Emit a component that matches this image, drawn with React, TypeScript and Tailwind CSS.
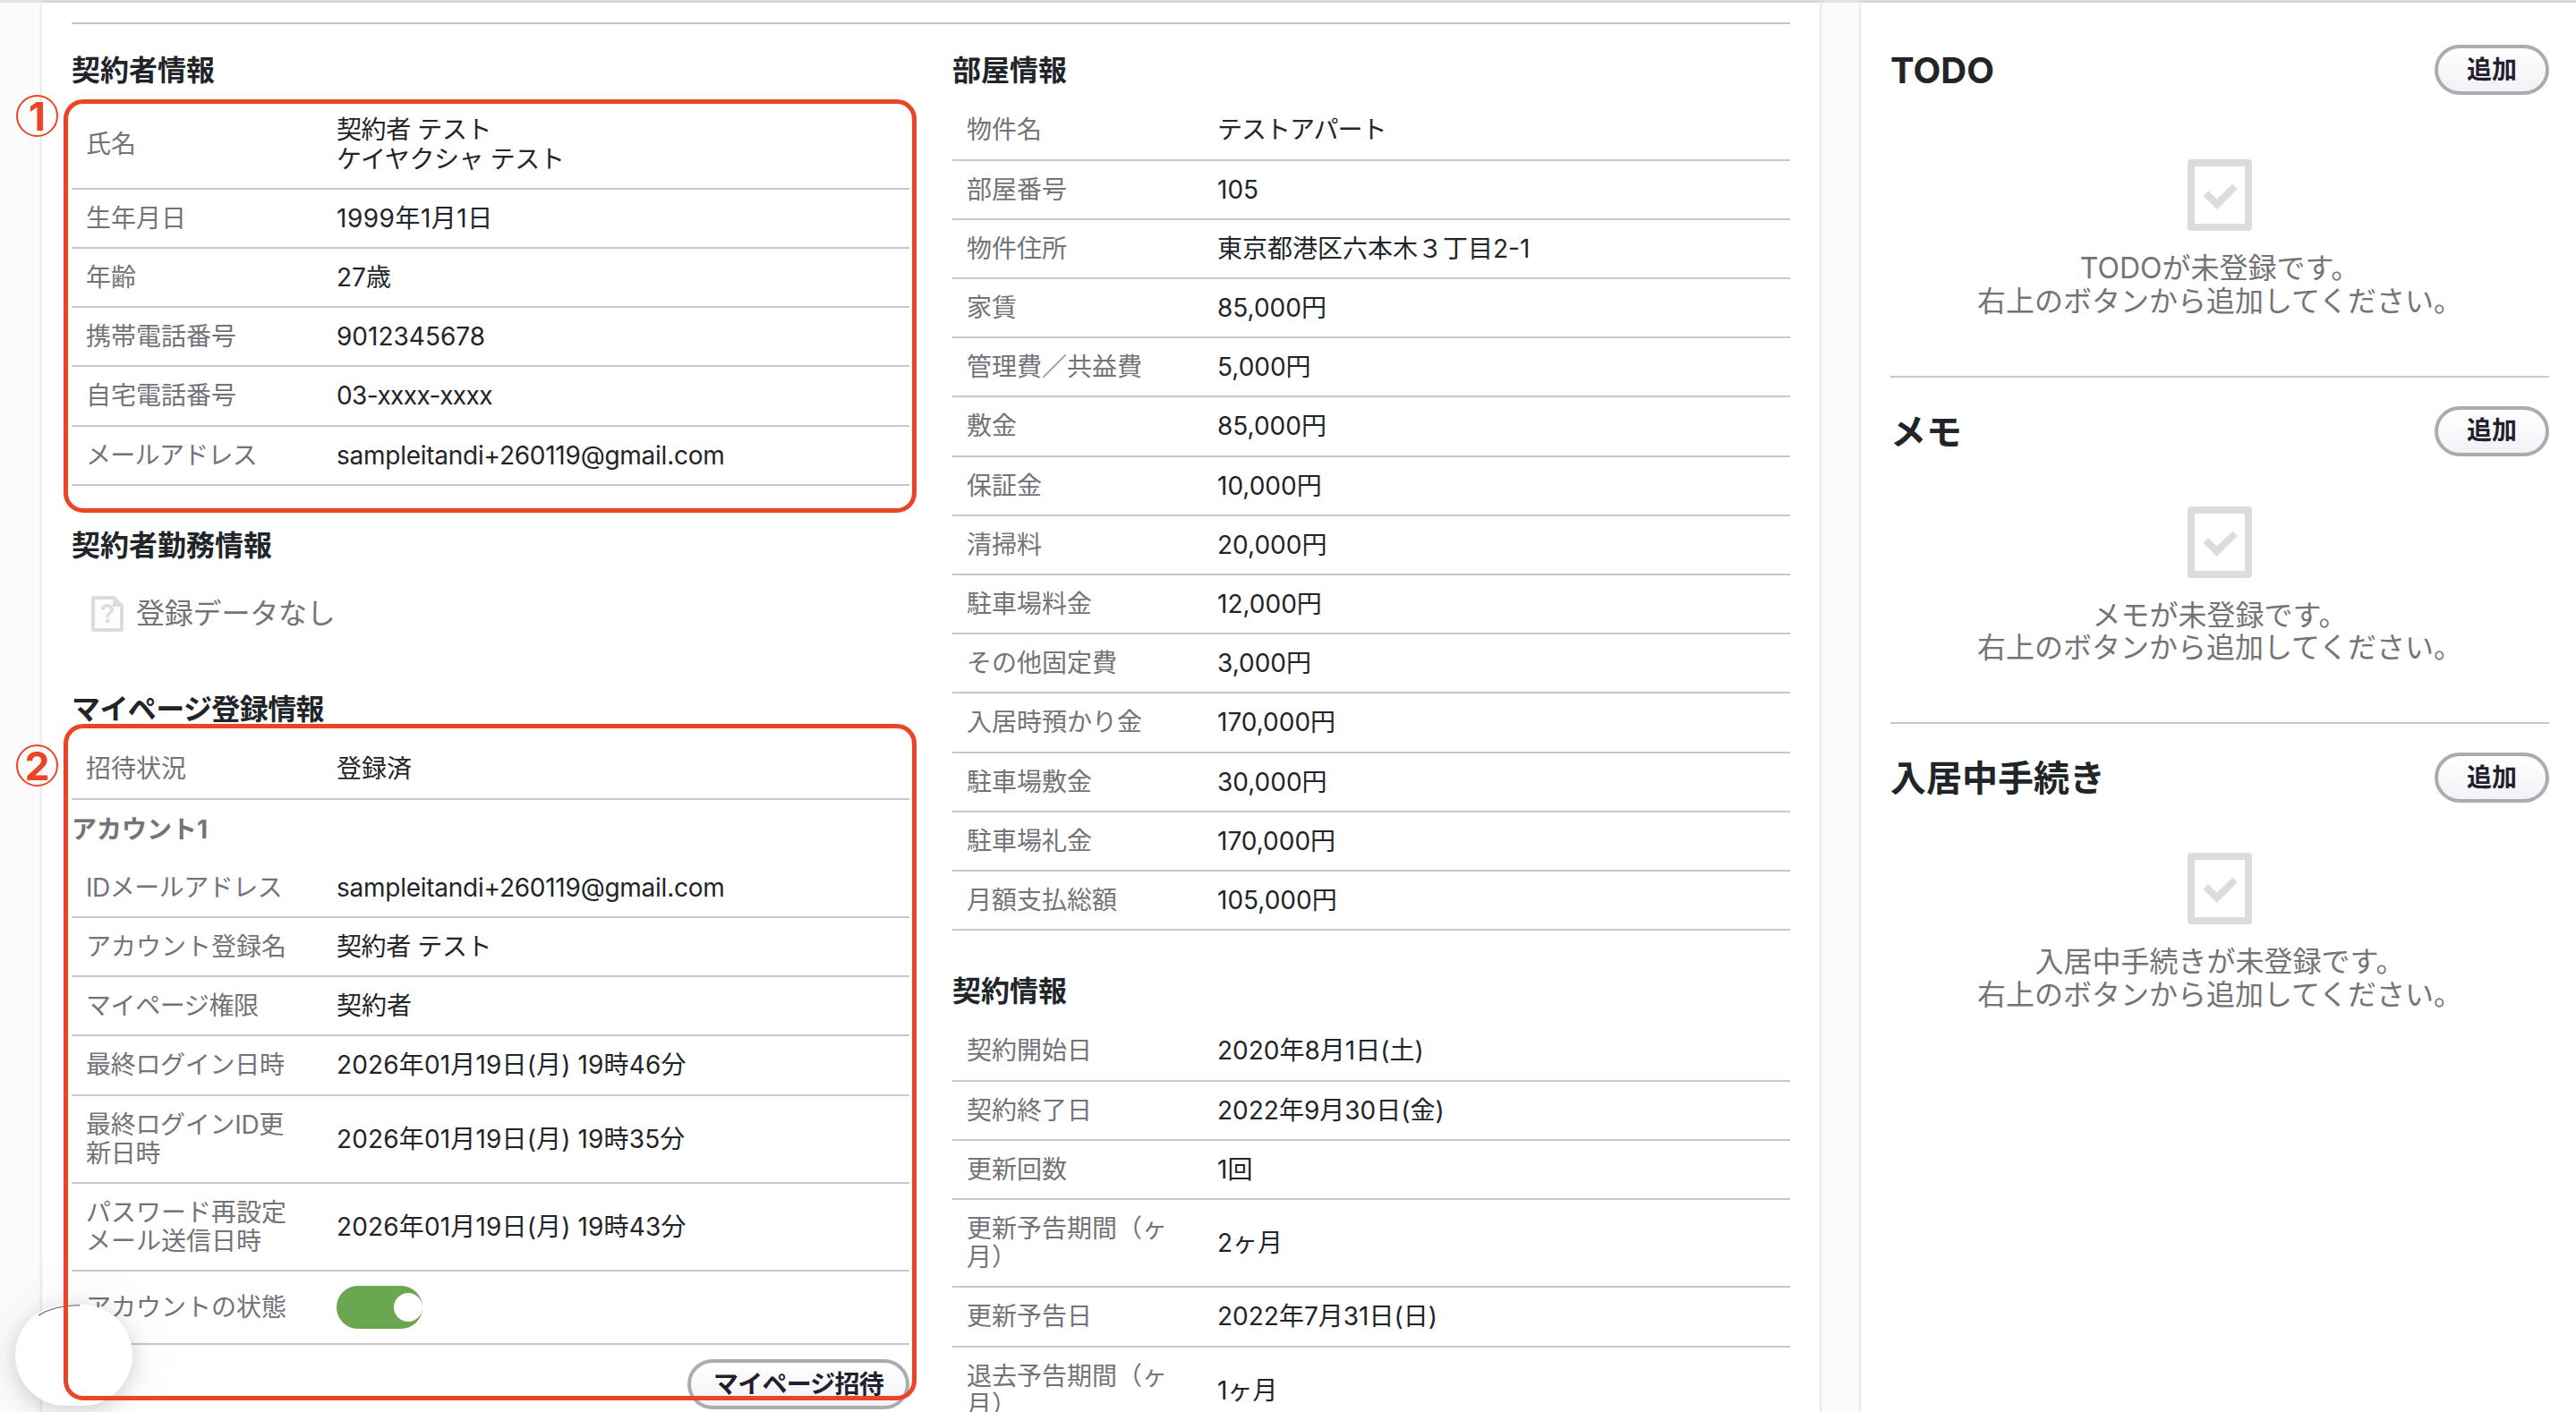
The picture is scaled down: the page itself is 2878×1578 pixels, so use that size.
import { ReactNode } from "react";

type Row = { label: string; value: ReactNode; labelClass?: string; valueClass?: string };

const contractor: Row[] = [
  {
    label: "氏名",
    value: (
      <>
        契約者 テスト
        <br />
        ケイヤクシャ テスト
      </>
    ),
    valueClass: "tracking-[-0.4px]",
  },
  { label: "生年月日", value: "1999年1月1日", valueClass: "tracking-[0.5px]" },
  { label: "年齢", value: "27歳" },
  { label: "携帯電話番号", value: "9012345678" },
  { label: "自宅電話番号", value: "03-xxxx-xxxx", valueClass: "tracking-[-0.6px]" },
  {
    label: "メールアドレス",
    value: "sampleitandi+260119@gmail.com",
    labelClass: "tracking-[-0.7px]",
    valueClass: "tracking-[-0.25px]",
  },
];

const account: Row[] = [
  {
    label: "IDメールアドレス",
    value: "sampleitandi+260119@gmail.com",
    labelClass: "tracking-[-0.5px]",
    valueClass: "tracking-[-0.25px]",
  },
  { label: "アカウント登録名", value: "契約者 テスト", valueClass: "tracking-[-0.4px]" },
  { label: "マイページ権限", value: "契約者", labelClass: "tracking-[-0.4px]" },
  {
    label: "最終ログイン日時",
    value: "2026年01月19日(月) 19時46分",
    labelClass: "tracking-[-0.3px]",
    valueClass: "tracking-[0.15px]",
  },
  {
    label: "最終ログインID更新日時",
    value: "2026年01月19日(月) 19時35分",
    labelClass: "tracking-[-0.3px]",
    valueClass: "tracking-[0.15px]",
  },
  {
    label: "パスワード再設定メール送信日時",
    value: "2026年01月19日(月) 19時43分",
    valueClass: "tracking-[0.15px]",
  },
  { label: "アカウントの状態", value: <Toggle /> },
];

const room: Row[] = [
  { label: "物件名", value: "テストアパート", valueClass: "tracking-[-1px]" },
  { label: "部屋番号", value: "105" },
  { label: "物件住所", value: "東京都港区六本木３丁目2-1" },
  { label: "家賃", value: "85,000円" },
  { label: "管理費／共益費", value: "5,000円" },
  { label: "敷金", value: "85,000円" },
  { label: "保証金", value: "10,000円" },
  { label: "清掃料", value: "20,000円" },
  { label: "駐車場料金", value: "12,000円" },
  { label: "その他固定費", value: "3,000円" },
  { label: "入居時預かり金", value: "170,000円" },
  { label: "駐車場敷金", value: "30,000円" },
  { label: "駐車場礼金", value: "170,000円" },
  { label: "月額支払総額", value: "105,000円" },
];

const contract: Row[] = [
  { label: "契約開始日", value: "2020年8月1日(土)" },
  { label: "契約終了日", value: "2022年9月30日(金)" },
  { label: "更新回数", value: "1回" },
  { label: "更新予告期間（ヶ月）", value: "2ヶ月" },
  { label: "更新予告日", value: "2022年7月31日(日)" },
  { label: "退去予告期間（ヶ月）", value: "1ヶ月" },
];

const sideSections = ["TODO", "メモ", "入居中手続き"];

function Toggle() {
  return (
    <div className="flex h-12 w-24 items-center justify-end rounded-full bg-[#6ba650]">
      <div className="size-8 rounded-full bg-white" />
    </div>
  );
}

const Heading = ({ children }: { children: ReactNode }) => (
  <h2 className="mb-4 text-[32px] leading-[36.8px] font-bold text-[#212529]">{children}</h2>
);

const InfoTable = ({ rows }: { rows: Row[] }) => (
  <dl>
    {rows.map((row) => (
      <div key={row.label} className="flex items-center border-b-2 border-[#c7c7cc] py-4">
        <dt className={`w-[296px] shrink-0 pr-8 pl-4 break-all text-[#737378] ${row.labelClass ?? ""}`}>
          {row.label}
        </dt>
        <dd className={`text-[#212529] ${row.valueClass ?? ""}`}>{row.value}</dd>
      </div>
    ))}
  </dl>
);

const PillButton = ({ children, className = "w-32" }: { children: ReactNode; className?: string }) => (
  <button
    className={`flex h-14 items-center justify-center rounded-full border-4 border-[#acacaf] bg-linear-to-b from-white to-[#f2f2f7] font-bold whitespace-nowrap text-[#231f2e] ${className}`}
  >
    {children}
  </button>
);

const CheckIcon = () => (
  <svg width="72" height="80" viewBox="0 0 72 80" fill="#dcdcde">
    <path
      fillRule="evenodd"
      d="M4 0h64a4 4 0 0 1 4 4v72a4 4 0 0 1-4 4H4a4 4 0 0 1-4-4V4a4 4 0 0 1 4-4zM8 8v64h56V8z"
    />
    <path d="M17.7 41l5.3-6 9.8 9.5 17.7-17 5.3 5.4L32.8 56z" />
  </svg>
);

const NoDataIcon = () => (
  <svg width="36" height="40" viewBox="0 0 36 40" fill="#dcdcde">
    <path
      fillRule="evenodd"
      d="M2 0h24l10 10v28a2 2 0 0 1-2 2H2a2 2 0 0 1-2-2V2a2 2 0 0 1 2-2zM4 4v32h28V12h-8V4z"
    />
    <path d="M11 15.500c0-4 3-6.500 7-6.500s7 2.300 7 6c0 4.400-5 4.800-5 9h-4c0-5.400 5-6 5-9 0-1.500-1.200-2.500-3-2.500s-3 1-3 3zM16 26h4v4h-4z" />
  </svg>
);

const Marker = ({ children }: { children: ReactNode }) => (
  <div className="flex size-[47px] items-center justify-center rounded-full border-2 border-[#ec4427] text-[44px] leading-none font-bold text-[#ec4427]">
    {children}
  </div>
);

export default function App() {
  return (
    <div className="relative h-[1578px] w-[2878px] overflow-hidden bg-[#fbfbfc] font-['Inter','Noto_Sans_CJK_JP',sans-serif] text-[28px] leading-[32.2px]">
      <div className="h-[3px] bg-[#e6dfe8]" />
      <div className="flex h-full">
        <main className="ml-[47px] w-[1986px] bg-white px-[33px] pt-[22px] shadow-[0_0_4px_rgba(0,0,0,0.2)]">
          <hr className="border-t-2 border-[#c7c7c9]" />
          <div className="flex gap-12 pt-[33.6px]">
            <section className="w-[936px]">
              <Heading>契約者情報</Heading>
              <InfoTable rows={contractor} />

              <div className="pt-[49px]">
                <Heading>契約者勤務情報</Heading>
              </div>
              <div className="mt-[37px] flex items-center gap-[14px] pl-[22px] text-[32px] leading-[40px] tracking-[-0.2px] text-[#737378]">
                <NoDataIcon />
                登録データなし
              </div>

              <div className="pt-[69px] tracking-[-0.6px]">
                <Heading>マイページ登録情報</Heading>
              </div>
              <InfoTable rows={[{ label: "招待状況", value: "登録済" }]} />
              <h3 className="py-[17px] font-bold text-[#737378]">アカウント1</h3>
              <InfoTable rows={account} />
              <div className="flex justify-end pt-4">
                <PillButton className="w-[248px] tracking-[-0.8px]">マイページ招待</PillButton>
              </div>
            </section>

            <section className="w-[936px]">
              <Heading>部屋情報</Heading>
              <InfoTable rows={room} />
              <div className="pt-[49.4px]">
                <Heading>契約情報</Heading>
              </div>
              <InfoTable rows={contract} />
            </section>
          </div>
        </main>

        <aside className="ml-[46px] w-[799px] bg-white pr-[30px] pl-[33px] shadow-[0_0_4px_rgba(0,0,0,0.2)]">
          {sideSections.map((title, i) => (
            <section
              key={title}
              className={i === 0 ? "pt-[47px] pb-16" : "border-t-2 border-[#c7c7c9] pt-8 pb-16"}
            >
              <div className="flex items-center justify-between">
                <h2 className="pt-0.5 text-[40px] leading-[46px] font-bold text-[#212529]">{title}</h2>
                <PillButton>追加</PillButton>
              </div>
              <div className={`flex flex-col items-center gap-6 ${i === 0 ? "mt-[72px]" : "mt-14"}`}>
                <CheckIcon />
                <p className="text-center text-[32px] leading-[36.8px] text-[#737378]">
                  {title}が未登録です。
                  <br />
                  右上のボタンから追加してください。
                </p>
              </div>
            </section>
          ))}
        </aside>
      </div>

      {/* Floating chat launcher */}
      <div className="absolute top-[1458px] left-[17px] h-[113px] w-[131px] rounded-full bg-white shadow-[0_6px_24px_rgba(0,0,0,0.16),0_0_80px_rgba(0,0,0,0.06)]">
        <svg width="131" height="113" viewBox="0 0 131 113" fill="none">
          <path d="M26 12Q46 0 72 .8" stroke="#55555c" strokeWidth="1.2" />
        </svg>
      </div>

      {/* Annotations */}
      <div className="absolute top-[111px] left-[71px] h-[462px] w-[953px] rounded-[22px] border-[5px] border-[#ec4427]" />
      <div className="absolute top-[809px] left-[71px] h-[756px] w-[953px] rounded-[22px] border-[5px] border-[#ec4427]" />
      <div className="absolute top-[106px] left-[18px]">
        <Marker>1</Marker>
      </div>
      <div className="absolute top-[832px] left-[18px]">
        <Marker>2</Marker>
      </div>
    </div>
  );
}
